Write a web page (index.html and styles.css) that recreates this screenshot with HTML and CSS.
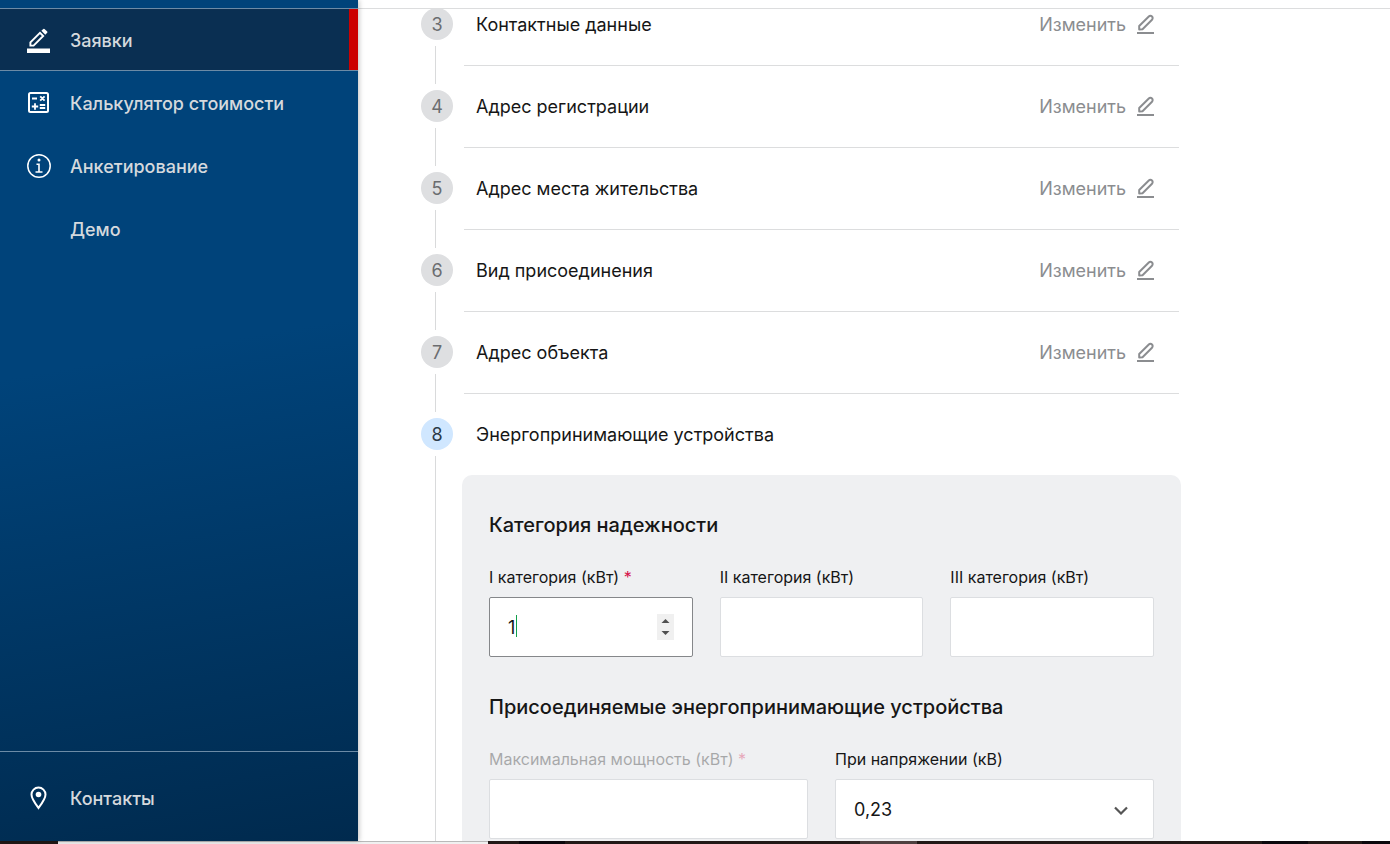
FILE: index.html
```html
<!DOCTYPE html>
<html lang="ru">
<head>
  <meta charset="utf-8">
  <meta name="viewport" content="width=device-width, initial-scale=1">
  <title>Заявки</title>
  <link rel="stylesheet" href="styles.css">
</head>
<body>
  <svg class="sprite" aria-hidden="true">
    <symbol id="pencil" viewBox="0 0 18 22">
      <path d="M2.200 12 11.800 2.500a2.200 2.200 0 0 1 3.200 3.200L5.500 15.200l-3.300.300z" fill="none" stroke="currentColor" stroke-width="2" stroke-linejoin="round"/>
      <path d="M0 18h17v2H0z" fill="currentColor"/>
    </symbol>
  </svg>
  <div class="app">
    <aside class="sidebar">
      <nav class="nav">
        <a class="nav-item nav-item-active" href="#">
          <svg class="nav-icon" viewBox="0 0 24 26" aria-hidden="true">
            <path d="M0 21.500h23V26H0z" fill="#fff"/>
            <path d="M3.400 18.600v-3.200L13 5.800l3.200 3.200-9.600 9.600z" fill="none" stroke="#fff" stroke-width="1.900"/>
            <path d="m14.400 3.800 1.900-1.900q.6-.5 1.200 0l2.700 2.700q.5.600 0 1.200l-1.900 1.900z" fill="#fff"/>
          </svg>
          <span class="nav-text">Заявки</span>
        </a>
        <a class="nav-item" href="#">
          <svg class="nav-icon" viewBox="0 0 24 24" fill="none" stroke="#fff" aria-hidden="true">
            <rect x="2" y="2" width="19" height="19" rx="1.500" stroke-width="2"/>
            <path d="M5 7.500h5M13.200 5.300l4.400 4.400M17.600 5.300l-4.400 4.400M4.800 15.500h6.400M8 12.300v6.400M12.800 14h5.400M12.800 17h5.400" stroke-width="1.800"/>
          </svg>
          <span class="nav-text">Калькулятор стоимости</span>
        </a>
        <a class="nav-item" href="#">
          <svg class="nav-icon" viewBox="0 0 24 24" fill="none" stroke="#fff" aria-hidden="true">
            <circle cx="12" cy="12" r="11.200" stroke-width="1.500"/>
            <path d="M9.500 10.200H12V18M8.500 18h7" stroke-width="1.600"/>
            <circle cx="12" cy="6" r="1.500" fill="#fff" stroke="none"/>
          </svg>
          <span class="nav-text">Анкетирование</span>
        </a>
        <a class="nav-item" href="#">
          <span class="nav-icon"></span>
          <span class="nav-text">Демо</span>
        </a>
      </nav>
      <div class="nav-footer">
        <a class="nav-item" href="#">
          <svg class="nav-icon" viewBox="0 0 24 24" fill="none" aria-hidden="true">
            <path d="M11.500 22C8.500 18 4.500 13 4.500 8.600a7 7 0 0 1 14 0C18.500 13 14.500 18 11.500 22z" stroke="#fff" stroke-width="2"/>
            <circle cx="11.500" cy="8.500" r="2.800" fill="#fff"/>
          </svg>
          <span class="nav-text">Контакты</span>
        </a>
      </div>
    </aside>

    <main class="main">
      <div class="topbar"></div>
      <div class="scroll">
        <ol class="steps">
          <li class="step">
            <span class="step-number">3</span>
            <div class="step-body">
              <div class="step-header">
                <h2 class="step-title">Контактные данные</h2>
                <button class="edit" type="button">Изменить <svg class="edit-icon"><use href="#pencil"/></svg></button>
              </div>
            </div>
          </li>
          <li class="step">
            <span class="step-number">4</span>
            <div class="step-body">
              <div class="step-header">
                <h2 class="step-title">Адрес регистрации</h2>
                <button class="edit" type="button">Изменить <svg class="edit-icon"><use href="#pencil"/></svg></button>
              </div>
            </div>
          </li>
          <li class="step">
            <span class="step-number">5</span>
            <div class="step-body">
              <div class="step-header">
                <h2 class="step-title">Адрес места жительства</h2>
                <button class="edit" type="button">Изменить <svg class="edit-icon"><use href="#pencil"/></svg></button>
              </div>
            </div>
          </li>
          <li class="step">
            <span class="step-number">6</span>
            <div class="step-body">
              <div class="step-header">
                <h2 class="step-title">Вид присоединения</h2>
                <button class="edit" type="button">Изменить <svg class="edit-icon"><use href="#pencil"/></svg></button>
              </div>
            </div>
          </li>
          <li class="step">
            <span class="step-number">7</span>
            <div class="step-body">
              <div class="step-header">
                <h2 class="step-title">Адрес объекта</h2>
                <button class="edit" type="button">Изменить <svg class="edit-icon"><use href="#pencil"/></svg></button>
              </div>
            </div>
          </li>
          <li class="step step-current">
            <span class="step-number">8</span>
            <div class="step-body">
              <div class="step-header">
                <h2 class="step-title">Энергопринимающие устройства</h2>
              </div>
              <form class="panel">
                <section class="group">
                  <h3 class="group-title">Категория надежности</h3>
                  <div class="fields fields-three">
                    <div class="field">
                      <label class="label" for="cat1">I категория (кВт) <span class="required">*</span></label>
                      <div class="control-wrap">
                        <input class="control control-filled" id="cat1" type="number" value="1">
                        <span class="caret"></span>
                      </div>
                    </div>
                    <div class="field">
                      <label class="label" for="cat2">II категория (кВт)</label>
                      <input class="control" id="cat2" type="number">
                    </div>
                    <div class="field">
                      <label class="label" for="cat3">III категория (кВт)</label>
                      <input class="control" id="cat3" type="number">
                    </div>
                  </div>
                </section>
                <section class="group">
                  <h3 class="group-title">Присоединяемые энергопринимающие устройства</h3>
                  <div class="fields fields-two">
                    <div class="field">
                      <label class="label label-disabled" for="power">Максимальная мощность (кВт) <span class="required">*</span></label>
                      <input class="control" id="power" type="number" disabled>
                    </div>
                    <div class="field">
                      <label class="label" for="voltage">При напряжении (кВ)</label>
                      <div class="control-wrap">
                        <select class="control" id="voltage"><option>0,23</option></select>
                        <svg class="chevron" viewBox="0 0 14 9" aria-hidden="true"><path d="m1 1.500 6 6 6-6" fill="none" stroke="#555" stroke-width="2.200"/></svg>
                      </div>
                    </div>
                  </div>
                </section>
              </form>
            </div>
          </li>
        </ol>
      </div>
    </main>
  </div>
  <div class="taskbar"></div>
</body>
</html>
```

FILE: styles.css
```css
* {
  box-sizing: border-box;
}

body {
  margin: 0;
  height: 100vh;
  display: flex;
  flex-direction: column;
  overflow: hidden;
  background: #fff;
  color: #161616;
  font-family: Inter, "Open Sans", sans-serif;
  font-size: 18px;
}

h2,
h3,
ol {
  margin: 0;
  padding: 0;
  font-weight: 400;
}

input,
select,
button {
  font: inherit;
  color: inherit;
}

.sprite {
  display: none;
}

.app {
  flex: 1;
  min-height: 0;
  display: flex;
}

.sidebar {
  position: relative;
  flex: 0 0 358px;
  display: flex;
  flex-direction: column;
  justify-content: space-between;
  padding-top: 8px;
  background: linear-gradient(170deg, #00437a 42%, #002a4e 100%);
  box-shadow: 1px 0 5px rgba(0, 0, 0, 0.25);
}

.nav-item {
  display: flex;
  align-items: center;
  gap: 19px;
  height: 63px;
  padding: 0 27px;
  color: #d5d9dd;
  font-weight: 500;
  text-decoration: none;
}

.nav-item-active {
  background: #0a2f52;
  border-top: 1px solid #6c8ba6;
  border-bottom: 1px solid #6c8ba6;
  box-shadow: inset -9px 0 #c00;
}

.nav-icon {
  flex: none;
  width: 24px;
  height: 26px;
}

.nav-text {
  padding-top: 2px;
}

.nav-footer {
  height: 90px;
  padding-top: 14px;
  border-top: 1px solid #6c8ba6;
}

.main {
  flex: 1;
  min-width: 0;
  display: flex;
  flex-direction: column;
}

.topbar {
  flex: none;
  height: 9px;
  border-bottom: 1px solid #dcddde;
}

.scroll {
  flex: 1;
  min-height: 0;
  overflow: hidden;
  padding: 0 24px 0 63px;
}

.steps {
  max-width: 760px;
  margin-top: -1px;
  list-style: none;
}

.step {
  display: grid;
  grid-template-columns: 32px minmax(0, 1fr);
  grid-template-rows: 32px 1fr;
  column-gap: 9px;
  min-height: 82px;
}

.step-number {
  display: flex;
  align-items: center;
  justify-content: center;
  border-radius: 50%;
  background: #dedfe1;
  color: #6b6d70;
}

.step-current .step-number {
  background: #d0e7ff;
  color: #2b3a48;
}

.step::after {
  content: "";
  grid-column: 1;
  grid-row: 2;
  width: 1px;
  margin: 6px 0 6px 14px;
  background: #d9dadb;
}

.step-body {
  grid-column: 2;
  grid-row: 1 / 3;
}

.step-header {
  display: flex;
  align-items: flex-start;
  justify-content: space-between;
  height: 58px;
  margin: 0 2px;
  padding: 0 24px 0 12px;
  border-bottom: 1px solid #dcddde;
  line-height: 34px;
}

.step-current .step-header {
  height: 57px;
  border-bottom: 0;
}

.step-title {
  font-size: 18px;
}

.edit {
  display: flex;
  align-items: center;
  gap: 11px;
  height: 34px;
  padding: 0;
  border: 0;
  background: none;
  color: #8b8d90;
}

.edit-icon {
  width: 18px;
  height: 22px;
}

.panel {
  display: flex;
  flex-direction: column;
  gap: 34px;
  padding: 34px 27px;
  border-radius: 10px;
  background: #eff0f2;
}

.group-title {
  margin-bottom: 24px;
  font-size: 20px;
  font-weight: 500;
  line-height: 32px;
}

.fields {
  display: grid;
  gap: 27px;
}

.fields-three {
  grid-template-columns: repeat(3, minmax(0, 1fr));
}

.fields-two {
  grid-template-columns: repeat(2, minmax(0, 1fr));
}

.label {
  display: block;
  margin-bottom: 8px;
  font-size: 16px;
  line-height: 24px;
}

.required {
  color: #d6124a;
}

.label-disabled {
  opacity: 0.33;
}

.control-wrap {
  position: relative;
}

.control {
  display: block;
  width: 100%;
  height: 60px;
  padding: 0 18px;
  border: 1px solid #dcdee1;
  border-radius: 2px;
  outline: 0;
  background: #fff;
  appearance: none;
  caret-color: #12a04b;
}

.control:focus,
.control-filled {
  border-color: #85878a;
}

.control::-webkit-inner-spin-button {
  appearance: none;
  width: 17px;
  height: 26px;
  opacity: 0;
  background: #f0f0f0 url("data:image/svg+xml,%3Csvg xmlns='http://www.w3.org/2000/svg' viewBox='0 0 17 26'%3E%3Cpath d='M4.500 9 8.500 5l4 4zM4.500 17l4 4 4-4z' fill='%23505050'/%3E%3C/svg%3E") center no-repeat;
}

.control-filled::-webkit-inner-spin-button {
  opacity: 1;
}

.caret {
  position: absolute;
  top: 18px;
  left: 27px;
  width: 1px;
  height: 22px;
  background: #12a04b;
  pointer-events: none;
}

.control:focus + .caret {
  display: none;
}

.chevron {
  position: absolute;
  top: 27px;
  right: 26px;
  width: 14px;
  height: 9px;
  pointer-events: none;
}

.taskbar {
  flex: none;
  height: 3px;
  background:
    linear-gradient(#b9b9b9, #b9b9b9) 58px 0 / 430px 1px no-repeat,
    linear-gradient(90deg, #211816 58px, #f0f0f0 58px 488px, #211816 488px 519px, #0b070c 519px 565px, #211816 565px 860px, #4e4040 860px 917px, #211816 917px 1262px, #0b070c 1262px 1308px, #211816 1308px 1362px, #0b070c 1362px);
}
```
